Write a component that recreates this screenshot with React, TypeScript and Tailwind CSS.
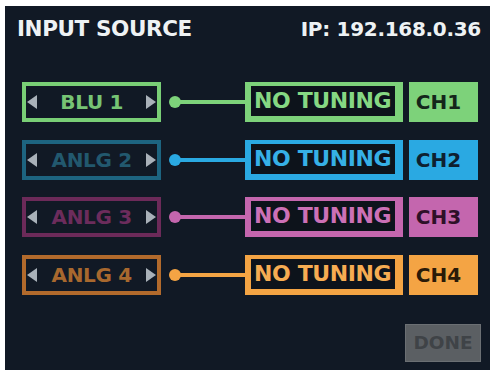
import React from 'react';

interface Channel {
  source: string;
  ch: string;
  srcBorder: string;
  srcText: string;
  lineText: string;
  chText: string;
  bg: string;
}

const channels: Channel[] = [
  {
    source: 'BLU 1',
    ch: 'CH1',
    srcBorder: 'border-[#79cf76]',
    srcText: 'text-[#76c474]',
    lineText: 'text-[#86d883]',
    chText: 'text-[#14261a]',
    bg: 'bg-[#7dd27a]',
  },
  {
    source: 'ANLG 2',
    ch: 'CH2',
    srcBorder: 'border-[#1d6480]',
    srcText: 'text-[#22586e]',
    lineText: 'text-[#36b0e6]',
    chText: 'text-[#0e2030]',
    bg: 'bg-[#2aa9e2]',
  },
  {
    source: 'ANLG 3',
    ch: 'CH3',
    srcBorder: 'border-[#6c2a59]',
    srcText: 'text-[#6c2c5c]',
    lineText: 'text-[#cc70b6]',
    chText: 'text-[#2e1028]',
    bg: 'bg-[#c466ae]',
  },
  {
    source: 'ANLG 4',
    ch: 'CH4',
    srcBorder: 'border-[#b26a2c]',
    srcText: 'text-[#a8682e]',
    lineText: 'text-[#f6ac52]',
    chText: 'text-[#2a1a08]',
    bg: 'bg-[#f4a444]',
  },
];

function Arrow({ dir }: { dir: 'left' | 'right' }) {
  return (
    <svg width="10" height="14" viewBox="0 0 10 14" className="shrink-0">
      {dir === 'left' ? (
        <polygon points="10,0 10,14 0,7" fill="#a9b1b9" />
      ) : (
        <polygon points="0,0 0,14 10,7" fill="#a9b1b9" />
      )}
    </svg>
  );
}

function Row({ c }: { c: Channel }) {
  return (
    <div className="flex items-center h-10">
      {/* source selector */}
      <div
        className={`w-[141px] h-10 border-4 ${c.srcBorder} flex items-center justify-between px-[1px]`}
      >
        <Arrow dir="left" />
        <span className={`text-[20px] leading-none font-bold tracking-[-0.3px] ${c.srcText}`}>
          {c.source}
        </span>
        <Arrow dir="right" />
      </div>

      {/* connector */}
      <div className={`ml-[8px] w-3 h-3 rounded-full ${c.bg}`} />
      <div className={`w-[65px] h-1 -ml-px ${c.bg}`} />

      {/* tuning */}
      <div className={`w-[160px] h-10 ${c.bg} pt-[4px] pb-[6px] pl-[6px] pr-[8px]`}>
        <div className="w-full h-full bg-[#0d131b] flex items-center justify-center">
          <span className={`text-[22px] leading-none font-bold tracking-[-0.4px] ${c.lineText}`}>
            NO TUNING
          </span>
        </div>
      </div>

      {/* channel */}
      <div className={`ml-[6px] w-[70px] h-10 ${c.bg} flex items-center pl-[7px]`}>
        <span className={`text-[20px] leading-none font-bold ${c.chText}`}>{c.ch}</span>
      </div>
    </div>
  );
}

export default function App() {
  return (
    <div
      className="w-[493px] h-[373px] bg-white pt-[6px] pl-[5px]"
      style={{ fontFamily: '"DejaVu Sans", "Liberation Sans", sans-serif' }}
    >
      <div className="w-[485px] h-[364px] bg-[#111925] flex flex-col px-[12px] pt-[12px]">
        <div className="flex justify-between items-center h-[22px] text-[#eef2f4] font-bold">
          <span className="text-[21.5px] leading-none tracking-[-0.4px]">INPUT SOURCE</span>
          <span className="text-[20px] leading-none tracking-[-0.3px] mr-[-3px]">IP: 192.168.0.36</span>
        </div>

        <div className="flex flex-col gap-[17.5px] mt-[42px] pl-[5px]">
          {channels.map((c) => (
            <Row key={c.ch} c={c} />
          ))}
        </div>

        <div className="flex justify-end mt-auto mb-[8px] mr-[-3px]">
          <div className="w-[76px] h-[38px] bg-[#5b5f63] border border-[#6b6f73] flex items-center justify-center">
            <span className="text-[18.5px] leading-none font-bold text-[#3f4347]">DONE</span>
          </div>
        </div>
      </div>
    </div>
  );
}
